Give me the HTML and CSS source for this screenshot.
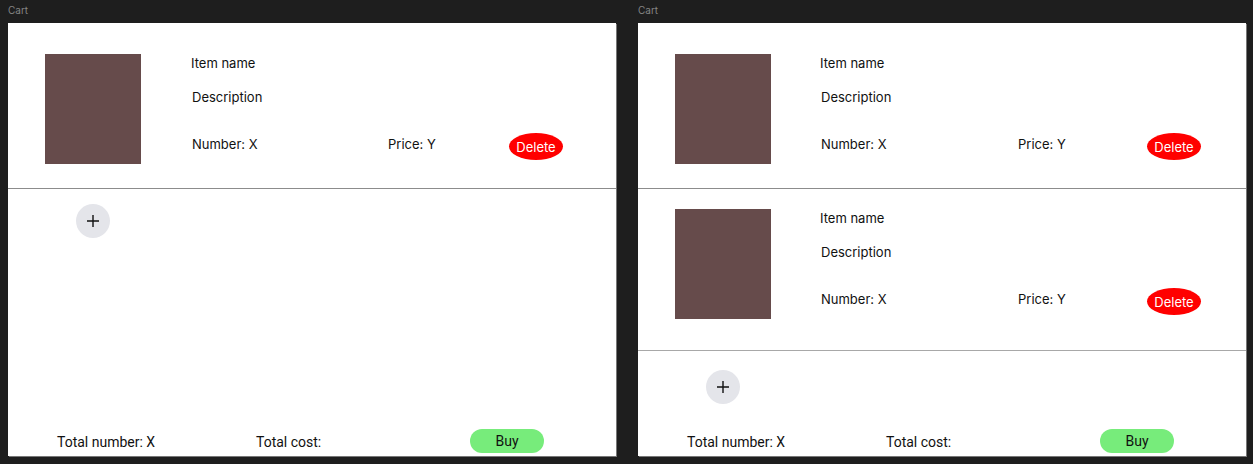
FILE: index.html
```html
<!DOCTYPE html>
<html lang="en">
<head>
<meta charset="utf-8">
<title>Cart</title>
<link rel="stylesheet" href="styles.css">
</head>
<body>
<div class="canvas">
  <section class="board">
    <div class="board-label">Cart</div>
    <div class="frame">
      <div class="list">
        <div class="item">
          <div class="thumb"></div>
          <div class="details">
            <div class="name">Item name</div>
            <div class="desc">Description</div>
            <div class="meta">
              <span class="number">Number: X</span>
              <span class="price">Price: Y</span>
              <button class="delete">Delete</button>
            </div>
          </div>
        </div>
      </div>
      <div class="add-row">
        <button class="add" aria-label="Add item">
          <svg width="14" height="14" viewBox="0 0 14 14"><path d="M7 1v12M1 7h12" stroke="#111" stroke-width="1.4" fill="none"/></svg>
        </button>
      </div>
      <div class="spacer"></div>
      <div class="footer">
        <span class="total-number">Total number: X</span>
        <span class="total-cost">Total cost:</span>
        <button class="buy">Buy</button>
      </div>
    </div>
  </section>
  <section class="board board-wide">
    <div class="board-label">Cart</div>
    <div class="frame">
      <div class="list">
        <div class="item">
          <div class="thumb"></div>
          <div class="details">
            <div class="name">Item name</div>
            <div class="desc">Description</div>
            <div class="meta">
              <span class="number">Number: X</span>
              <span class="price">Price: Y</span>
              <button class="delete">Delete</button>
            </div>
          </div>
        </div>
        <div class="item item-next">
          <div class="thumb"></div>
          <div class="details">
            <div class="name">Item name</div>
            <div class="desc">Description</div>
            <div class="meta">
              <span class="number">Number: X</span>
              <span class="price">Price: Y</span>
              <button class="delete">Delete</button>
            </div>
          </div>
        </div>
      </div>
      <div class="add-row add-row-next">
        <button class="add" aria-label="Add item">
          <svg width="14" height="14" viewBox="0 0 14 14"><path d="M7 1v12M1 7h12" stroke="#111" stroke-width="1.4" fill="none"/></svg>
        </button>
      </div>
      <div class="spacer"></div>
      <div class="footer">
        <span class="total-number">Total number: X</span>
        <span class="total-cost">Total cost:</span>
        <button class="buy">Buy</button>
      </div>
    </div>
  </section>
</div>
</body>
</html>
```
FILE: styles.css
```css
* { box-sizing: border-box; }
html, body { margin: 0; padding: 0; }
body {
  background: #1e1e1e;
  width: 1253px;
  height: 464px;
  overflow: hidden;
  font-family: Inter, "Noto Sans", sans-serif;
}
.canvas {
  display: flex;
  gap: 22px;
  padding-left: 8px;
}
.board {
  display: flex;
  flex-direction: column;
  width: 608px;
}
.board-label {
  height: 23px;
  font-size: 10px;
  line-height: 20px;
  color: #858585;
}
.frame {
  background: #fff;
  height: 433px;
  display: flex;
  flex-direction: column;
  box-shadow: 1px 1px 0 #777;
}
.list {
  padding-top: 11px;
}
.item {
  display: flex;
  padding: 20px 0 24px 37px;
  border-bottom: 1px solid #8c8c8c;
}
.item-next {
  padding-top: 20px;
  padding-bottom: 31px;
  border-bottom-color: #a8a8a8;
}
.thumb {
  width: 96px;
  height: 110px;
  background: #664b4b;
  flex: none;
}
.details {
  margin-left: 50px;
  display: flex;
  flex-direction: column;
  font-size: 13px;
  line-height: 18px;
  color: #111;
}
.board-wide .details { margin-left: 49px; }
.desc {
  margin-top: 16px;
  padding-left: 1px;
}
.meta {
  margin-top: 27px;
  display: flex;
  align-items: flex-start;
  padding-left: 1px;
}
.number {
  width: 196px;
  margin-top: 2px;
}
.price {
  width: 121px;
  margin-top: 2px;
}
.board-wide .number { width: 197px; }
.board-wide .price { width: 129px; }
.delete {
  width: 54px;
  height: 27px;
  border: none;
  border-radius: 50%;
  background: #ff0000;
  color: #fff;
  font-family: Inter, "Noto Sans", sans-serif;
  font-size: 13px;
  padding: 0;
}
.add-row {
  padding: 15px 0 0 68px;
}
.add-row-next {
  padding-top: 19px;
}
.add {
  width: 34px;
  height: 34px;
  border: none;
  border-radius: 50%;
  background: #e4e5ea;
  display: flex;
  align-items: center;
  justify-content: center;
  padding: 0;
}
.add svg { display: block; }
.spacer { flex: 1; }
.footer {
  display: flex;
  align-items: center;
  padding-left: 49px;
  margin-bottom: 3px;
  font-family: Roboto, "Liberation Sans", sans-serif;
  font-size: 14px;
  color: #111;
}
.total-number { width: 199px; margin-top: 2px; }
.total-cost { width: 214px; margin-top: 2px; }
.buy {
  width: 74px;
  height: 24px;
  border: none;
  border-radius: 12px;
  background: #77ec7b;
  font-family: Roboto, "Liberation Sans", sans-serif;
  font-size: 14px;
  color: #111;
  padding: 0;
}
```
